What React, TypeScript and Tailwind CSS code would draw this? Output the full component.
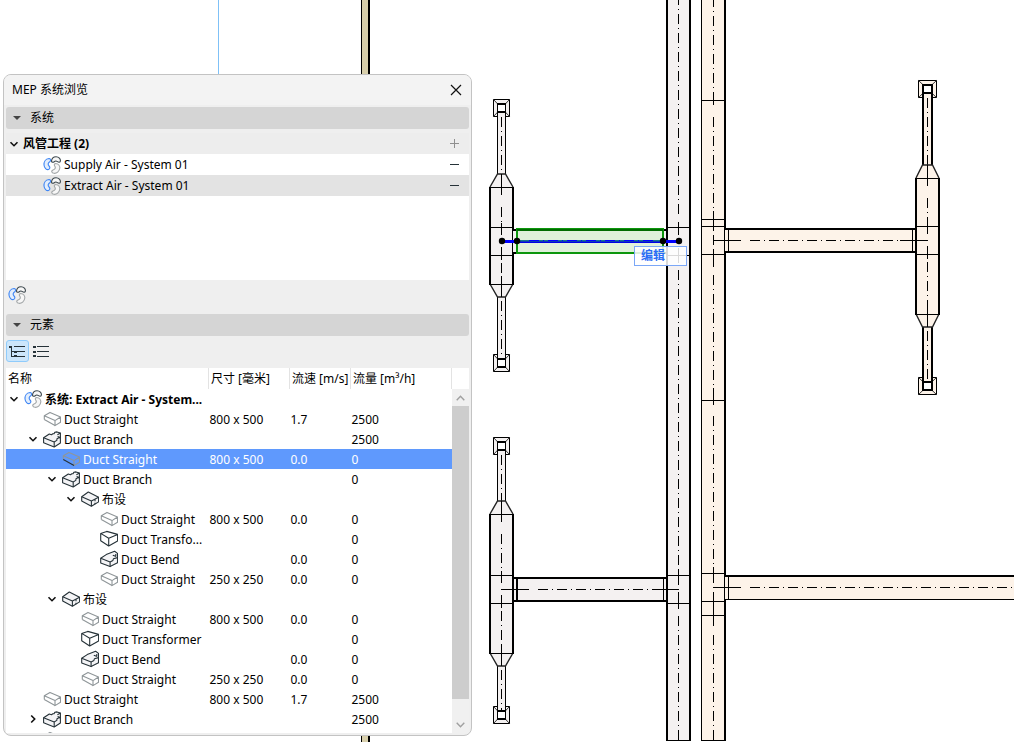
import React, { useState } from 'react';
import clsx from 'clsx';

type IconKind = 'system' | 'straight' | 'branch' | 'route' | 'transformer' | 'bend';

interface ElementRow {
  level: number;
  icon: IconKind;
  name: string;
  open?: boolean;
  size?: string;
  speed?: string;
  flow?: string;
}

const SYSTEMS = ['Supply Air - System 01', 'Extract Air - System 01'];

const ROWS: ElementRow[] = [
  { level: 0, icon: 'system', name: '系统: Extract Air - System...', open: true },
  { level: 1, icon: 'straight', name: 'Duct Straight', size: '800 x 500', speed: '1.7', flow: '2500' },
  { level: 1, icon: 'branch', name: 'Duct Branch', open: true, flow: '2500' },
  { level: 2, icon: 'straight', name: 'Duct Straight', size: '800 x 500', speed: '0.0', flow: '0' },
  { level: 2, icon: 'branch', name: 'Duct Branch', open: true, flow: '0' },
  { level: 3, icon: 'route', name: '布设', open: true },
  { level: 4, icon: 'straight', name: 'Duct Straight', size: '800 x 500', speed: '0.0', flow: '0' },
  { level: 4, icon: 'transformer', name: 'Duct Transfo...', flow: '0' },
  { level: 4, icon: 'bend', name: 'Duct Bend', speed: '0.0', flow: '0' },
  { level: 4, icon: 'straight', name: 'Duct Straight', size: '250 x 250', speed: '0.0', flow: '0' },
  { level: 2, icon: 'route', name: '布设', open: true },
  { level: 3, icon: 'straight', name: 'Duct Straight', size: '800 x 500', speed: '0.0', flow: '0' },
  { level: 3, icon: 'transformer', name: 'Duct Transformer', flow: '0' },
  { level: 3, icon: 'bend', name: 'Duct Bend', speed: '0.0', flow: '0' },
  { level: 3, icon: 'straight', name: 'Duct Straight', size: '250 x 250', speed: '0.0', flow: '0' },
  { level: 1, icon: 'straight', name: 'Duct Straight', size: '800 x 500', speed: '1.7', flow: '2500' },
  { level: 1, icon: 'branch', name: 'Duct Branch', open: false, flow: '2500' },
];

const INDENT = ['pl-0', 'pl-[19px]', 'pl-[38px]', 'pl-[57px]', 'pl-[76px]'];

const GREY = '#f4f1f1';
const PEACH = '#fdf3e9';

/* ---------- icons ---------- */

const SystemIcon = () => (
  <svg width="18" height="18" viewBox="0 0 18 18" fill="#f7f7f7" strokeWidth="1.1" className="shrink-0">
    <path stroke="#3f86f4" fill="#e3eefc" d="M6 2.5C2.4 3 .8 6.2 1 9c.3 3 2.5 5 4.5 4.5C7.5 12.8 7 11 6 10 4.5 8.2 5 7 7 5.5 8.2 4.5 7.5 2.5 6 2.5Z" />
    <path stroke="#3c474d" d="M8.5 5C8.8 2 10.5.7 13 .7c3 0 4.6 2.3 4.4 4.3-.1 1.5-1.9 1.4-2.9.6-1-.6-2.5-.6-3.2.1-1.3.9-2.9.7-2.8-.7Z" />
    <path stroke="#a2a6a8" d="M12.5 7.5c3 0 4.5 2.5 4.3 4.5-.3 3.5-3.3 5.6-5.8 5.3-2.5-.3-3-2.5-1-3.3 2-.6 2.8-2 2-3.5-1-1.5-1-2.9.5-3Z" />
  </svg>
);

const DuctIcon = ({ kind, active }: { kind: IconKind; active: boolean }) => {
  if (kind === 'system') return <SystemIcon />;
  return (
    <svg width="18" height="18" viewBox="0 0 18 18" fill="none" stroke="#263238" strokeWidth="1.1" strokeLinejoin="round" className="shrink-0">
      {kind === 'straight' && (
        <>
          <path stroke="#8f9699" d="M1.3 9.5V5.7L7 2.4 17.5 7v5.3L12 15.6v-5L1.3 5.7M12 10.6 17.5 7" />
          <path stroke={active ? '#263238' : '#8f9699'} d="M1.3 9.6 12 15.6" />
        </>
      )}
      {kind === 'branch' && (
        <>
          <path fill="#f4f4f6" d="M.6 7.8 6.3 4l2.2.7L9.8 3.8l1.4-.2.6-1.3L14 1.9l3.4 1.2V13l-6.2 4L.6 12.8Z" />
          <path d="M.6 7.8 11.2 12v5M11.2 12l2.6-1.6.2-1.6 1.4-.8 2-.3M14.4 4.8l3-1.7M14.6 6.4l2.8 1.2" />
        </>
      )}
      {kind === 'route' && (
        <>
          <path fill="#f4f4f6" d="M.7 6.8 7.3 2 17.6 7.3v4.6L10.4 16.3.7 11Z" />
          <path d="M.7 6.8 10.4 11v5.3M10.4 11l7.2-3.7" />
          <path strokeDasharray="2 1.5" d="M14 9.2v5" />
        </>
      )}
      {kind === 'transformer' && (
        <path d="M.7 3.4 6.7 1.4 17.6 4.4v6.5L8.7 16 .7 10.8ZM.7 3.4l8 4.8V16M8.7 8.2l8.9-3.8" />
      )}
      {kind === 'bend' && (
        <>
          <path fill="#f4f4f6" d="M.7 8.3 6.2 4.6 14.6 1.2l2.9 2.2v9.4l-7.4 3.8L.7 13Z" />
          <path d="M.7 8.3 10.1 12v4.6M10.1 12l2.8-1.6.5-1.6 4.1-1.2M12.8 5.2l3.4 1.2M15.8 4v2.4" />
        </>
      )}
    </svg>
  );
};

const Chevron = ({ open }: { open: boolean }) => (
  <svg width="10" height="10" viewBox="0 0 10 10" fill="none" stroke="#111" strokeWidth="1.6">
    <path d={open ? 'M1.5 3.2 5 6.7l3.5-3.5' : 'M3.2 1.5 6.7 5 3.2 8.5'} />
  </svg>
);

/* ---------- floor plan ---------- */

const H = ({ x1, x2, y, w = 1, color = '#000', dash }: { x1: number; x2: number; y: number; w?: number; color?: string; dash?: boolean }) => (
  <line x1={x1} x2={x2} y1={y + w / 2} y2={y + w / 2} stroke={color} strokeWidth={w} strokeDasharray={dash ? '10 4 1 4' : undefined} />
);

const V = ({ x, y1, y2, w = 1, color = '#000', dash }: { x: number; y1: number; y2: number; w?: number; color?: string; dash?: boolean }) => (
  <line x1={x + w / 2} x2={x + w / 2} y1={y1} y2={y2} stroke={color} strokeWidth={w} strokeDasharray={dash ? '10 4 1 4' : undefined} />
);

interface UnitProps {
  cx: number;
  fill: string;
  half: number; // half width of the narrow duct
  edge: number; // line weight of the narrow duct
  top: number;
  bottom: number;
  bodyTop: number;
  bodyBottom: number;
  ticks: [number, number];
}

const Diffuser = ({ cx, y, half, fill, edge }: { cx: number; y: number; half: number; fill: string; edge: number }) => {
  const l = cx - half - 4;
  const r = cx + half + 4;
  return (
    <g>
      <rect x={l + 0.5} y={y + 0.5} width={r - l} height={17} fill={fill} stroke="#000" />
      <path d={`M${l} ${y}L${r + 1} ${y + 18}M${r + 1} ${y}L${l} ${y + 18}`} stroke="#333" shapeRendering="auto" />
      <rect x={cx - half} y={y + 4} width={half * 2 + 1} height={10} />
      <rect x={cx - half + edge} y={y + 6} width={half * 2 + 1 - edge * 2} height={6} fill="#fff" />
    </g>
  );
};

const Unit = ({ cx, fill, half, edge, top, bottom, bodyTop, bodyBottom, ticks }: UnitProps) => {
  const nl = cx - half;
  const nr = cx + half + 1;
  const l = cx - 12;
  const r = cx + 13;
  return (
    <g>
      <Diffuser cx={cx} y={top} half={half} fill={fill} edge={edge} />
      <Diffuser cx={cx} y={bottom - 18} half={half} fill={fill} edge={edge} />
      {[[top + 14, bodyTop - 13], [bodyBottom + 13, bottom - 14]].map(([a, b]) => (
        <g key={a}>
          <rect x={nl} y={a} width={nr - nl} height={b - a} fill={fill} />
          <V x={nl} y1={a} y2={b} w={edge} />
          <V x={nr - edge} y1={a} y2={b} w={edge} />
          <V x={cx} y1={a + 4} y2={b} dash />
        </g>
      ))}
      <g shapeRendering="auto" stroke="#222" strokeWidth="1.4" fill={fill}>
        <path d={`M${l + 1} ${bodyTop}L${nl + 0.5} ${bodyTop - 13}H${nr - 0.5}L${r - 1} ${bodyTop}`} />
        <path d={`M${l + 1} ${bodyBottom}L${nl + 0.5} ${bodyBottom + 13}H${nr - 0.5}L${r - 1} ${bodyBottom}`} />
      </g>
      <rect x={l} y={bodyTop} width={25} height={bodyBottom - bodyTop} fill={fill} />
      <V x={l} y1={bodyTop} y2={bodyBottom} w={2} />
      <V x={r - 2} y1={bodyTop} y2={bodyBottom} w={2} />
      {[bodyTop, ticks[0], ticks[1], bodyBottom].map((y) => (
        <H key={y} x1={l} x2={r} y={y} />
      ))}
      <V x={cx} y1={bodyTop - 13} y2={bodyTop + 8} />
      <V x={cx} y1={bodyTop + 20} y2={ticks[0] + 8} dash />
      <V x={cx} y1={ticks[0] - 4} y2={ticks[0] + 8} />
      <V x={cx} y1={ticks[1] - 8} y2={ticks[1] + 5} />
      <V x={cx} y1={ticks[1] + 8} y2={bodyBottom - 8} dash />
      <V x={cx} y1={bodyBottom - 8} y2={bodyBottom + 13} />
    </g>
  );
};

const FloorPlan = () => (
  <svg className="absolute inset-0 h-full w-full" shapeRendering="crispEdges" aria-hidden="true">
    <V x={218} y1={0} y2={110} color="#7fc1f7" />
    <rect x={361} y={0} width={9} height={760} />
    <rect x={362} y={0} width={6} height={760} fill="#d8cfab" />

    {/* supply trunk */}
    <rect x={666} y={-4} width={25} height={745} />
    <rect x={668} y={-4} width={21} height={744} fill={GREY} />
    {[227, 255, 575, 603].map((y) => (
      <H key={y} x1={668} x2={689} y={y} />
    ))}
    <V x={678} y1={-5} y2={218} dash />
    <V x={678} y1={222} y2={235} />
    <V x={678} y1={248} y2={263} />
    <V x={678} y1={270} y2={565} dash />
    <V x={678} y1={569} y2={585} />
    <V x={678} y1={592} y2={609} />
    <V x={678} y1={616} y2={740} dash />

    {/* extract trunk */}
    <rect x={701} y={-4} width={25} height={745} />
    <rect x={702} y={-4} width={22} height={744} fill={PEACH} />
    {[100, 219, 226, 254, 400, 573, 601, 615].map((y) => (
      <H key={y} x1={702} x2={724} y={y} />
    ))}
    <V x={713} y1={-3} y2={92} dash />
    <V x={713} y1={92} y2={105} />
    <V x={713} y1={117} y2={210} dash />
    <V x={713} y1={211} y2={231} />
    <V x={713} y1={235} y2={245} />
    <V x={713} y1={249} y2={267} />
    <V x={713} y1={275} y2={386} dash />
    <V x={713} y1={388} y2={405} />
    <V x={713} y1={416} y2={565} dash />
    <V x={713} y1={567} y2={583} />
    <V x={713} y1={592} y2={626} />
    <V x={713} y1={635} y2={740} dash />

    <Unit cx={501} fill={GREY} half={4} edge={1} top={99} bottom={372} bodyTop={187} bodyBottom={284} ticks={[227, 255]} />
    <Unit cx={501} fill={GREY} half={4} edge={1} top={437} bottom={724} bodyTop={514} bodyBottom={653} ticks={[575, 603]} />
    <Unit cx={927} fill={PEACH} half={5} edge={2} top={80} bottom={395} bodyTop={178} bodyBottom={314} ticks={[226, 254]} />

    {/* lower supply branch */}
    <rect x={514} y={577} width={152} height={25} />
    <rect x={514} y={579} width={152} height={21} fill={GREY} />
    <V x={516} y1={578} y2={601} w={2} />
    <V x={663} y1={578} y2={601} />
    <H x1={501} x2={529} y={589} />
    <H x1={538} x2={652} y={589} dash />
    <H x1={652} x2={679} y={589} />

    {/* extract branches */}
    <rect x={725} y={228} width={190} height={25} />
    <rect x={725} y={230} width={190} height={21} fill={PEACH} />
    <V x={728} y1={229} y2={252} />
    <V x={912} y1={229} y2={252} />
    <H x1={713} x2={741} y={240} />
    <H x1={750} x2={900} y={240} dash />
    <H x1={900} x2={928} y={240} />

    <rect x={725} y={575} width="100%" height={25} />
    <rect x={725} y={577} width="100%" height={22} fill={PEACH} />
    <V x={728} y1={576} y2={599} />
    <H x1={713} x2={741} y={587} />
    <H x1={750} x2={2600} y={587} dash />

    {/* selected duct */}
    <rect x={513} y={229} width={153} height={25} />
    <rect x={513} y={231} width={153} height={21} fill={GREY} />
    <rect x={516} y={228} width={148} height={26} fill="#0c960c" />
    <rect x={517} y={229} width={146} height={2} fill="#006b00" />
    <rect x={518} y={231} width={144} height={21} fill="#dff1da" />
    <H x1={518} x2={662} y={240} w={2} color="#16788c" />
    <H x1={529} x2={654} y={240} color="#0000ff" dash />
    <H x1={518} x2={662} y={241} color="#0b3cb4" />
    <H x1={518} x2={662} y={242} color="#0000e6" />
    <H x1={502} x2={517} y={240} w={3} color="#0000ff" />
    <H x1={663} x2={679} y={240} w={3} color="#0000ff" />
    <g shapeRendering="auto">
      {[502, 517, 663, 679].map((x) => (
        <circle key={x} cx={x} cy={241} r={3.2} />
      ))}
    </g>
  </svg>
);

/* ---------- palette ---------- */

const SectionHeader = ({ title }: { title: string }) => (
  <button type="button" className="flex h-[22px] w-full items-center gap-[9px] rounded-[3px] bg-[#d5d5d5] pl-[7px] text-left">
    <svg width="8" height="4" viewBox="0 0 8 4" fill="#444"><path d="M0 0h8L4 4Z" /></svg>
    <span>{title}</span>
  </button>
);

const MinusIcon = () => (
  <svg width="9" height="9" viewBox="0 0 9 9" stroke="#263238" shapeRendering="crispEdges"><path d="M0 4.5h9" /></svg>
);

const App: React.FC = () => {
  const [activeSystem, setActiveSystem] = useState(1);
  const [activeRow, setActiveRow] = useState(3);
  const [treeView, setTreeView] = useState(true);

  return (
    <main className="relative min-h-screen overflow-hidden bg-white pt-[74px] pl-[3px] font-['Noto_Sans','Noto_Sans_CJK_SC',sans-serif] text-[12px] leading-[20px] text-black">
      <FloorPlan />

      <button
        type="button"
        className="absolute top-[246px] left-[634px] h-[20px] w-[53px] border border-[#7ba7f7] bg-white/85 pl-[6px] text-left leading-[18px] font-bold text-[#2a6df5]"
      >
        编辑
      </button>

      <section className="relative w-full max-w-[469px] overflow-hidden rounded-lg border border-[#c3c3c3] bg-[#efefef] px-[2px] pb-[2px]">
        <header className="-mx-[2px] mb-[2px] flex h-[30px] items-center justify-between bg-[#f3f3f3] pr-[9px] pl-2">
          <h1>MEP 系统浏览</h1>
          <button type="button" aria-label="关闭">
            <svg width="12" height="12" viewBox="0 0 12 12" stroke="#111" strokeWidth="1.2"><path d="M1 1l10 10M11 1 1 11" /></svg>
          </button>
        </header>

        <SectionHeader title="系统" />
        <div className="mt-1 flex h-[21px] items-center bg-[#ededed] pr-[10px] font-bold">
          <span className="flex w-[17px] pl-[3px]"><Chevron open /></span>
          <h2 className="flex-1">风管工程 (2)</h2>
          <button type="button" aria-label="添加">
            <svg width="9" height="9" viewBox="0 0 9 9" stroke="#8f8f8f" shapeRendering="crispEdges"><path d="M0 4.5h9M4.5 0v9" /></svg>
          </button>
        </div>
        <ul className="h-[126px] bg-white">
          {SYSTEMS.map((name, idx) => (
            <li
              key={name}
              onClick={() => setActiveSystem(idx)}
              className={clsx('flex h-[21px] items-center gap-[3px] pr-[10px] pl-[37px]', activeSystem === idx && 'bg-[#e3e3e3]')}
            >
              <SystemIcon />
              <span className="flex-1">{name}</span>
              <button type="button" aria-label="删除"><MinusIcon /></button>
            </li>
          ))}
        </ul>
        <div className="flex h-[34px] items-center pb-[4px] pl-[2px]">
          <button type="button" aria-label="新建系统"><SystemIcon /></button>
        </div>

        <SectionHeader title="元素" />
        <div className="flex h-[32px] items-center gap-px pb-[2px]">
          <button
            type="button"
            aria-label="树状视图"
            onClick={() => setTreeView(true)}
            className={clsx('flex h-[22px] w-[23px] items-center justify-center rounded-[3px] border', treeView ? 'border-[#8fcbfb] bg-[#cce6fb]' : 'border-transparent')}
          >
            <svg width="17" height="13" viewBox="0 0 17 13" stroke="#263238" fill="#263238" shapeRendering="crispEdges">
              <path stroke="none" d="M0 1h3v2H0zM5 6h3v2H5zM5 10h3v2H5z" />
              <path fill="none" d="M2.5 2v9.5H5M2.5 6.5H5M5 1.5h11M8 6.5h8M8 11.5h8" />
            </svg>
          </button>
          <button
            type="button"
            aria-label="列表视图"
            onClick={() => setTreeView(false)}
            className={clsx('flex h-[22px] w-[23px] items-center justify-center rounded-[3px] border', treeView ? 'border-transparent' : 'border-[#8fcbfb] bg-[#cce6fb]')}
          >
            <svg width="17" height="13" viewBox="0 0 17 13" stroke="#263238" fill="#263238" shapeRendering="crispEdges">
              <path stroke="none" d="M0 1h3v2H0zM0 6h3v2H0zM0 10h3v2H0z" />
              <path fill="none" d="M4 1.5h12M4 6.5h12M4 11.5h12" />
            </svg>
          </button>
        </div>

        <div className="flex h-[365px] overflow-hidden bg-white">
          <div className="min-w-0 flex-1">
            <table className="w-full table-fixed border-collapse text-left leading-[18px] whitespace-nowrap">
              <colgroup>
                <col />
                <col className="w-[81px]" />
                <col className="w-[61px]" />
                <col className="w-[101px]" />
              </colgroup>
              <thead>
                <tr className="h-[21px]">
                  {['名称', '尺寸 [毫米]', '流速 [m/s]', '流量 [m³/h]'].map((label) => (
                    <th key={label} className="border-r border-[#e3e3e3] p-0 pl-[2px] font-normal">{label}</th>
                  ))}
                </tr>
              </thead>
              <tbody>
                {ROWS.map((row, idx) => (
                  <tr
                    key={idx}
                    onClick={() => setActiveRow(idx)}
                    className={clsx('h-[20px]', activeRow === idx && 'bg-[#5f99fd] text-white')}
                  >
                    <td className="p-0">
                      <div className={clsx('flex h-[20px] items-center', INDENT[row.level], row.level === 0 && 'font-bold')}>
                        <span className="flex w-[18px] shrink-0 pl-[3px]">
                          {row.open !== undefined && <Chevron open={row.open} />}
                        </span>
                        <DuctIcon kind={row.icon} active={activeRow === idx} />
                        <span className="pt-[2px] pl-[3px]">{row.name}</span>
                      </div>
                    </td>
                    <td className="p-0 pt-[2px] pl-px">{row.size}</td>
                    <td className="p-0 pt-[2px] pl-px">{row.speed}</td>
                    <td className="p-0 pt-[2px] pl-px">{row.flow}</td>
                  </tr>
                ))}
                <tr className="h-[20px]">
                  <td className="p-0 pl-[37px]"><DuctIcon kind="straight" active={false} /></td>
                  <td colSpan={3} />
                </tr>
              </tbody>
            </table>
          </div>
          <div className="flex w-[17px] flex-col pt-[21px]">
            <div className="flex flex-1 flex-col bg-[#f0f0f0]">
              <button type="button" aria-label="向上滚动" className="flex h-[17px] items-center justify-center">
                <svg width="9" height="6" viewBox="0 0 9 6" fill="none" stroke="#a0a0a0" strokeWidth="1.4"><path d="M.7 5.2 4.5 1.2l3.8 4" /></svg>
              </button>
              <div className="flex-1 bg-[#cdcdcd]" />
              <div className="h-[17px]" />
              <button type="button" aria-label="向下滚动" className="flex h-[17px] items-center justify-center">
                <svg width="9" height="6" viewBox="0 0 9 6" fill="none" stroke="#a0a0a0" strokeWidth="1.4"><path d="M.7.8 4.5 4.8l3.8-4" /></svg>
              </button>
            </div>
          </div>
        </div>
      </section>
    </main>
  );
};

export default App;
